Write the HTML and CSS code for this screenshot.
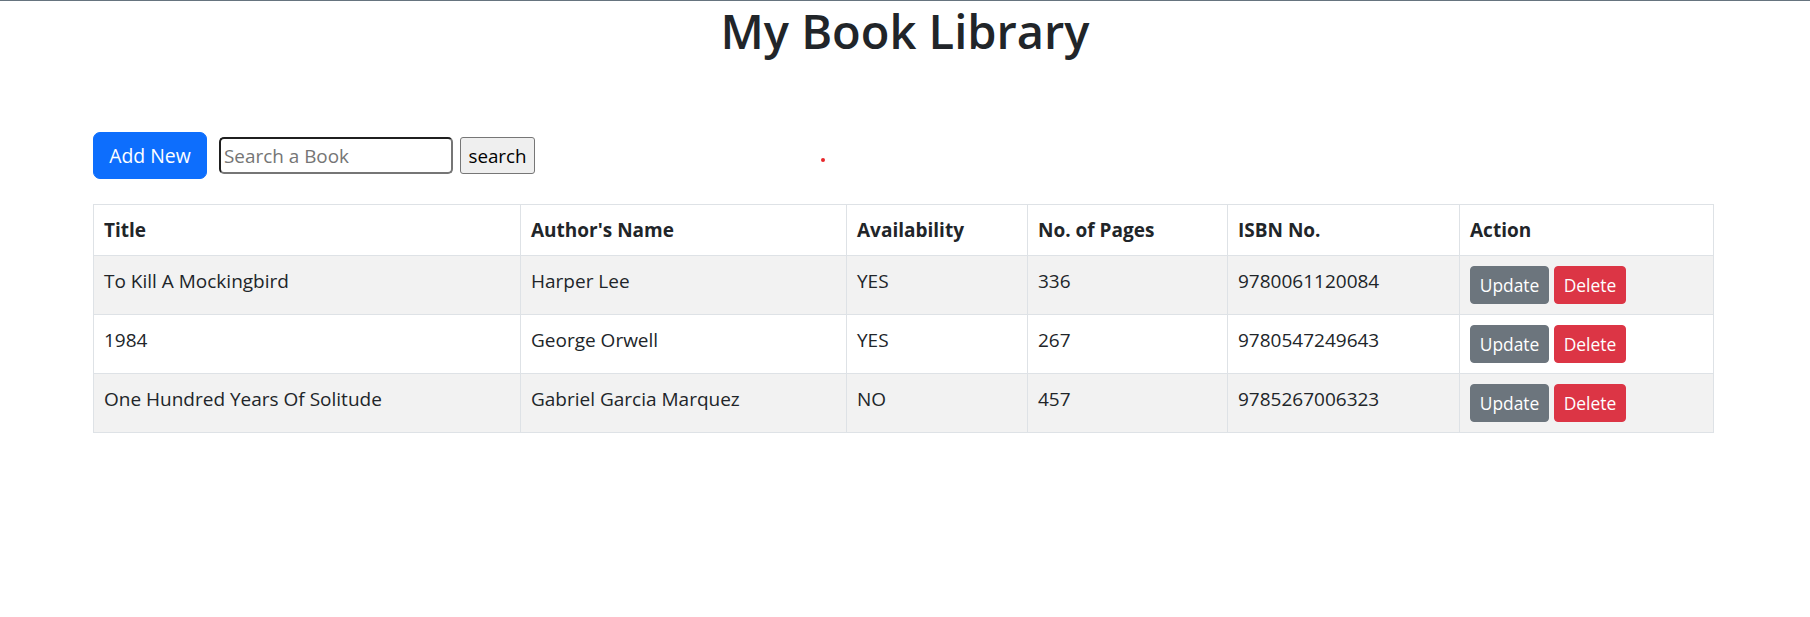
FILE: index.html
```html
<!DOCTYPE html>
<html lang="en">
<head>
<meta charset="utf-8">
<title>My Book Library</title>
<link rel="stylesheet" href="styles.css">
</head>
<body>
<div class="topbar"></div>
<h1 class="page-title">My Book Library</h1>
<main class="container">
  <div class="toolbar">
    <button class="btn btn-primary">Add New</button>
    <input class="search-input" type="text" placeholder="Search a Book">
    <button class="search-btn">search</button>
  </div>
  <table class="books">
    <colgroup>
      <col class="c1"><col class="c2"><col class="c3"><col class="c4"><col class="c5"><col class="c6">
    </colgroup>
    <thead>
      <tr>
        <th>Title</th>
        <th>Author's Name</th>
        <th>Availability</th>
        <th>No. of Pages</th>
        <th>ISBN No.</th>
        <th>Action</th>
      </tr>
    </thead>
    <tbody>
      <tr class="odd">
        <td>To Kill A Mockingbird</td>
        <td>Harper Lee</td>
        <td>YES</td>
        <td>336</td>
        <td>9780061120084</td>
        <td class="actions"><button class="btn-sm btn-secondary">Update</button><button class="btn-sm btn-danger">Delete</button></td>
      </tr>
      <tr>
        <td>1984</td>
        <td>George Orwell</td>
        <td>YES</td>
        <td>267</td>
        <td>9780547249643</td>
        <td class="actions"><button class="btn-sm btn-secondary">Update</button><button class="btn-sm btn-danger">Delete</button></td>
      </tr>
      <tr class="odd">
        <td>One Hundred Years Of Solitude</td>
        <td>Gabriel Garcia Marquez</td>
        <td>NO</td>
        <td>457</td>
        <td>9785267006323</td>
        <td class="actions"><button class="btn-sm btn-secondary">Update</button><button class="btn-sm btn-danger">Delete</button></td>
      </tr>
    </tbody>
  </table>
</main>
<span class="dot"></span>
</body>
</html>
```

FILE: styles.css
```css
html, body {
  margin: 0;
  padding: 0;
  background: #ffffff;
}

body {
  font-family: "Open Sans", "Noto Sans", sans-serif;
  color: #212529;
  font-size: 19px;
  position: relative;
  min-height: 617px;
}

.topbar {
  height: 1px;
  background: #66747f;
}

.page-title {
  margin: 0;
  text-align: center;
  font-size: 47px;
  font-weight: 600;
  line-height: 61px;
  color: #212529;
}

.container {
  width: 1620px;
  margin: 0 0 0 93px;
}

.toolbar {
  display: flex;
  align-items: center;
  margin-top: 70px;
}

.btn {
  font-family: inherit;
  font-size: 19.4px;
  line-height: 30px;
  border: 1px solid transparent;
  border-radius: 7px;
  cursor: pointer;
}

.btn-primary {
  background: #0d6efd;
  border-color: #0d6efd;
  color: #ffffff;
  width: 114px;
  height: 47px;
  padding: 0;
}

.search-input {
  margin-left: 12px;
  width: 234px;
  height: 37px;
  box-sizing: border-box;
  padding: 0 3px;
  font-family: inherit;
  font-size: 18.9px;
  color: #212529;
  border-style: solid;
  border-width: 2px;
  border-color: #1f1f1f #767676 #767676 #1f1f1f;
  border-radius: 5px;
  background: #ffffff;
  outline: none;
}

.search-input::placeholder {
  color: #757575;
}

.search-btn {
  margin-left: 7px;
  width: 75px;
  height: 37px;
  box-sizing: border-box;
  padding: 0;
  font-family: inherit;
  font-size: 18.8px;
  color: #000000;
  background: #efefef;
  border: 1px solid #767676;
  border-radius: 3px;
}

.books {
  margin-top: 25px;
  width: 1620px;
  table-layout: fixed;
  border-collapse: collapse;
  font-size: 19px;
}

.c1 { width: 427px; }
.c2 { width: 326px; }
.c3 { width: 181px; }
.c4 { width: 200px; }
.c5 { width: 232px; }
.c6 { width: 254px; }

.books th,
.books td {
  border: 1px solid #dee2e6;
  padding: 10px 10px;
  line-height: 30px;
  text-align: left;
  vertical-align: top;
}

.books th {
  font-weight: 700;
}

.books tr.odd td {
  background: #f2f2f2;
}

.actions {
  white-space: nowrap;
}

.btn-sm {
  font-family: inherit;
  font-size: 17.4px;
  line-height: 26px;
  height: 38px;
  box-sizing: border-box;
  border: 1px solid transparent;
  border-radius: 4px;
  color: #ffffff;
  vertical-align: top;
}

.btn-secondary {
  background: #6c757d;
  border-color: #6c757d;
  width: 79px;
  padding: 0;
}

.btn-danger {
  background: #dc3545;
  border-color: #dc3545;
  width: 72px;
  padding: 0;
  margin-left: 5px;
}

.dot {
  position: absolute;
  left: 821px;
  top: 158px;
  width: 4px;
  height: 4px;
  border-radius: 50%;
  background: #e8262b;
}
```
